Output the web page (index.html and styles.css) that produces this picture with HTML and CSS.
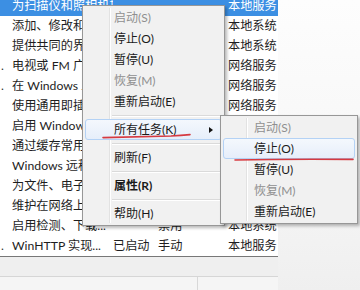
FILE: index.html
```html
<!DOCTYPE html>
<html lang="zh-CN">
<head>
<meta charset="utf-8">
<link rel="stylesheet" href="styles.css">
</head>
<body>
<div class="screen">
  <div class="list">
    <div class="row selected"><span class="cut"></span><span class="desc">为扫描仪和照相机提供图像获取服务</span><span class="status"></span><span class="start"></span><span class="logon">本地服务</span></div>
    <div class="row"><span class="cut"></span><span class="desc">添加、修改和删除应用程序</span><span class="status"></span><span class="start"></span><span class="logon">本地系统</span></div>
    <div class="row"><span class="cut"></span><span class="desc">提供共同的界面和对象模型</span><span class="status"></span><span class="start"></span><span class="logon">本地系统</span></div>
    <div class="row"><span class="cut">.</span><span class="desc">电视或 FM 广播接收</span><span class="status"></span><span class="start"></span><span class="logon">网络服务</span></div>
    <div class="row"><span class="cut">.</span><span class="desc">在 Windows 上启用</span><span class="status"></span><span class="start"></span><span class="logon">网络服务</span></div>
    <div class="row"><span class="cut"></span><span class="desc">使用通用即插即用设备</span><span class="status"></span><span class="start"></span><span class="logon">网络服务</span></div>
    <div class="row"><span class="cut"></span><span class="desc">启用 Windows 事件</span><span class="status"></span><span class="start"></span><span class="logon">本地服务</span></div>
    <div class="row"><span class="cut"></span><span class="desc">通过缓存常用字体数据</span><span class="status"></span><span class="start"></span><span class="logon">本地服务</span></div>
    <div class="row"><span class="cut"></span><span class="desc">Windows 远程管理服务</span><span class="status"></span><span class="start"></span><span class="logon">网络服务</span></div>
    <div class="row"><span class="cut"></span><span class="desc">为文件、电子邮件和其他</span><span class="status"></span><span class="start"></span><span class="logon">本地系统</span></div>
    <div class="row"><span class="cut"></span><span class="desc">维护在网络上的计算机</span><span class="status"></span><span class="start"></span><span class="logon">本地服务</span></div>
    <div class="row"><span class="cut"></span><span class="desc">启用检测、下载...</span><span class="status"></span><span class="start">禁用</span><span class="logon">本地系统</span></div>
    <div class="row"><span class="cut">.</span><span class="desc">WinHTTP 实现...</span><span class="status">已启动</span><span class="start">手动</span><span class="logon">本地服务</span></div>
  </div>
  <div class="pane-bar"></div>
  <div class="tabs"><div class="tab"></div></div>

  <div class="menu main-menu">
    <div class="item disabled">启动(S)</div>
    <div class="item">停止(O)</div>
    <div class="item">暂停(U)</div>
    <div class="item disabled">恢复(M)</div>
    <div class="item">重新启动(E)</div>
    <div class="sep"></div>
    <div class="item hot">所有任务(K)<span class="arrow"></span></div>
    <div class="sep"></div>
    <div class="item">刷新(F)</div>
    <div class="sep"></div>
    <div class="item bold">属性(R)</div>
    <div class="sep"></div>
    <div class="item">帮助(H)</div>
  </div>

  <div class="menu sub-menu">
    <div class="item disabled">启动(S)</div>
    <div class="item hot">停止(O)</div>
    <div class="item">暂停(U)</div>
    <div class="item disabled">恢复(M)</div>
    <div class="item">重新启动(E)</div>
  </div>

  <svg class="marks" width="360" height="290" viewBox="0 0 360 290">
    <path d="M103 137.6 Q140 136.6 171 136 Q181 135.2 190 134.6" />
    <path d="M235 160 Q290 158.8 353 159.4" />
  </svg>
</div>
</body>
</html>
```
FILE: styles.css
```css
html, body {
  margin: 0;
  padding: 0;
}
.screen {
  position: relative;
  width: 360px;
  height: 290px;
  overflow: hidden;
  background: linear-gradient(#fdfdfd, #f7f7f7 55%, #efefef);
  font-family: Lato, "Noto Sans CJK SC", sans-serif;
  font-size: 12px;
  color: #1e1e1e;
}
.list {
  width: 278px;
  margin-top: -4px;
  background: #fff;
  border-bottom: 1px solid #777;
  display: flex;
  flex-direction: column;
}
.row {
  display: grid;
  grid-template-columns: 12px 101px 45px 70px 50px;
  height: 20px;
  line-height: 20px;
  font-size: 12.2px;
  white-space: nowrap;
}
.row > span {
  overflow: hidden;
}
.row.selected {
  background: #3c8fe3;
  color: #fff;
}
.cut {
  padding-left: 1px;
  color: #333;
}
.pane-bar {
  width: 278px;
  height: 19px;
  background: #efefef;
  border-bottom: 1px solid #d6d6d6;
}
.tabs {
  width: 278px;
  height: 14px;
  background: #f5f5f5;
}
.tab {
  width: 197px;
  height: 14px;
  border-right: 1px solid #d8d8d8;
}

.menu {
  position: absolute;
  background: #f1f1f1;
  border: 1px solid #979797;
  box-shadow: 2px 2px 3px rgba(0, 0, 0, 0.28);
  padding: 1px 0 1px;
  display: flex;
  flex-direction: column;
  box-sizing: border-box;
}
.menu::before {
  content: "";
  position: absolute;
  top: 2px;
  bottom: 2px;
  width: 1px;
  background: #e2e2e2;
  border-right: 1px solid #fff;
}
.main-menu {
  left: 82px;
  top: 5px;
  width: 143px;
}
.main-menu::before {
  left: 26px;
}
.sub-menu {
  left: 220px;
  top: 115px;
  width: 138px;
}
.sub-menu::before {
  left: 25px;
}
.item {
  position: relative;
  height: 21px;
  line-height: 21px;
  display: flex;
  align-items: center;
  margin: 0 2px;
  padding-left: 28px;
  padding-right: 8px;
  border: 1px solid transparent;
  border-radius: 3px;
  box-sizing: border-box;
  color: #1a1a1a;
  white-space: nowrap;
}
.sub-menu .item {
  padding-left: 30px;
}
.item.disabled {
  color: #8f8f8f;
}
.item.bold {
  font-weight: bold;
}
.item.hot {
  border-color: #b4d2f5;
  background: linear-gradient(#f4f8fd, #e6eefa);
}
.arrow {
  margin-left: auto;
  width: 0;
  height: 0;
  border-top: 3.5px solid transparent;
  border-bottom: 3.5px solid transparent;
  border-left: 4px solid #111;
}
.sep {
  height: 7px;
  margin-left: 29px;
  margin-right: 3px;
  display: flex;
  flex-direction: column;
  justify-content: center;
}
.sep::after {
  content: "";
  height: 1px;
  background: #dadada;
  border-bottom: 1px solid #fff;
}
.marks {
  position: absolute;
  left: 0;
  top: 0;
  pointer-events: none;
}
.marks path {
  fill: none;
  stroke: #d4262c;
  stroke-width: 1.6;
  stroke-linecap: round;
  opacity: 0.9;
}
```
